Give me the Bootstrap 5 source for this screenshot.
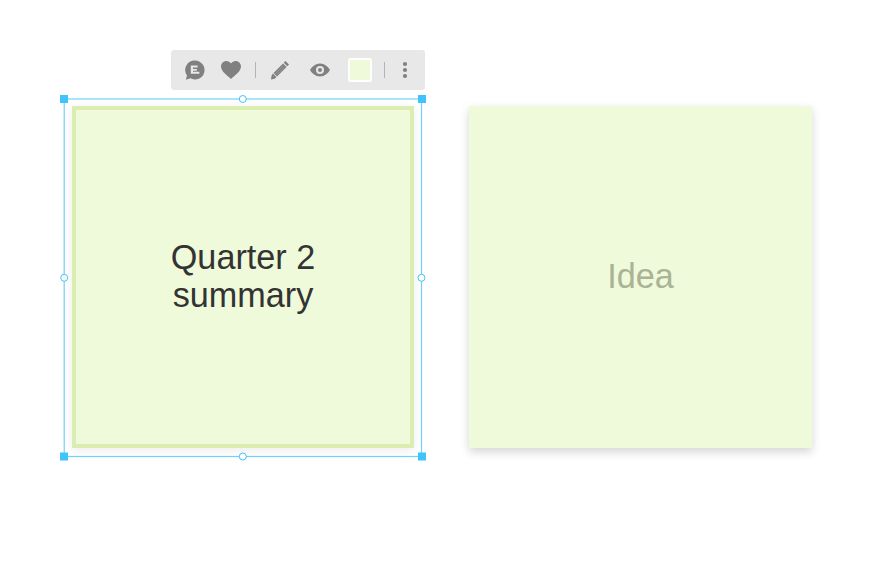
<!DOCTYPE html>
<html lang="en">

<head>
    <meta charset="UTF-8">
    <meta name="viewport" content="width=device-width, initial-scale=1.0">
    <title>Sticky notes</title>
    <link href="https://cdn.jsdelivr.net/npm/bootstrap@5.3.2/dist/css/bootstrap.min.css" rel="stylesheet">
    <style>
        body {
            background: #fff;
            overflow: hidden;
        }

        .board {
            position: relative;
            width: 882px;
            height: 562px;
        }

        /* Toolbar above the selected note */
        .note-toolbar {
            position: absolute;
            left: 171px;
            top: 50px;
            width: 254px;
            height: 40px;
            background: #e8e8e8;
            border-radius: 3px;
        }

        .tool {
            position: absolute;
            top: 10px;
            width: 20px;
            height: 20px;
            fill: #808080;
        }

        .tool-sep {
            position: absolute;
            top: 12px;
            width: 1px;
            height: 16px;
            background: #b4b4b4;
        }

        .pencil-line {
            fill: none;
            stroke: #a6a6a6;
            stroke-width: .7;
        }

        .swatch {
            position: absolute;
            left: 177px;
            top: 8px;
            width: 24px;
            height: 24px;
            background: #eefad9;
            border: 2px solid #fff;
            border-radius: 3px;
        }

        /* Notes */
        .sticky {
            position: absolute;
            top: 106px;
            height: 342px;
            padding-bottom: 3px;
            background: #eefad9;
            font-family: "Liberation Sans", Arial, sans-serif;
            font-size: 34.2px;
            line-height: 38px;
            text-align: center;
        }

        .sticky-selected {
            left: 72px;
            width: 342px;
            color: #333;
            border: 4px solid #dcedb1;
            box-shadow: 0 2px 10px rgba(0, 0, 0, .08);
        }

        .sticky-plain {
            left: 469px;
            width: 343px;
            color: #abb296;
            box-shadow: 0 4px 9px rgba(0, 0, 0, .17);
        }

        /* Selection frame and handles */
        .select-layer {
            position: absolute;
            left: 0;
            top: 0;
            width: 882px;
            height: 562px;
        }

        .frame-line {
            fill: none;
            stroke: #6fd3f7;
            stroke-width: 1.2;
        }

        .grip {
            fill: #3fc3f9;
        }

        .grip-round {
            fill: #fff;
            stroke: #3fc3f9;
            stroke-width: 1;
        }

        .t1 { left: 14px; }
        .t2 { left: 50px; }
        .t3 { left: 99px; }
        .t4 { left: 139px; }
        .t5 { left: 224px; }
        .s1 { left: 84px; }
        .s2 { left: 213px; }
    </style>
</head>

<body>
    <div class="board">
        <!-- Notes -->
        <div class="sticky sticky-selected d-flex align-items-center justify-content-center">
            <div>Quarter 2<br>summary</div>
        </div>
        <div class="sticky sticky-plain d-flex align-items-center justify-content-center">
            <div>Idea</div>
        </div>

        <!-- Selection -->
        <svg class="select-layer" viewBox="0 0 882 562">
            <rect class="frame-line" x="64.2" y="99" width="357.3" height="357.5"/>
            <rect class="grip" x="60" y="95" width="8" height="8"/>
            <rect class="grip" x="418" y="95" width="8" height="8"/>
            <rect class="grip" x="60" y="452.500" width="8" height="8"/>
            <rect class="grip" x="418" y="452.500" width="8" height="8"/>
            <circle class="grip-round" cx="242.800" cy="99" r="3.500"/>
            <circle class="grip-round" cx="242.800" cy="456.500" r="3.500"/>
            <circle class="grip-round" cx="64.200" cy="277.800" r="3.500"/>
            <circle class="grip-round" cx="421.500" cy="277.800" r="3.500"/>
        </svg>

        <!-- Toolbar -->
        <div class="note-toolbar">
            <svg class="tool t1" viewBox="0 0 20 20">
                <path fill-rule="evenodd" d="M10 .5a9.500 9.500 0 1 1-4.600 17.800L1.600 19.600a.5.5 0 0 1-.6-.7l1-3.400A9.500 9.500 0 0 1 10 .5zM5.800 5.600v8.200h8.600v-2H8v-1h3.800V9H8V7.600h4.600v-2z"/>
            </svg>
            <svg class="tool t2" viewBox="0 0 20 20">
                <path d="M10 19C7 16.300 0 11.600 0 6.600 0 3.300 2.500 1 5.400 1 7.300 1 9 2 10 3.500 11 2 12.700 1 14.600 1 17.500 1 20 3.300 20 6.600c0 5-7 9.700-10 12.400z"/>
            </svg>
            <span class="tool-sep s1"></span>
            <svg class="tool t3" viewBox="0 0 20 20">
                <path d="M15.400 1l3.600 3.600-1.700 1.700-3.600-3.600zM13 3.400l3.600 3.600-9.500 9.500-3.600-3.600zM2.900 13.600l3.500 3.500-1.300 1.300L1.500 19.500l-.5-.5.6-3.600z"/>
                <path class="pencil-line" d="M13.200 5.800l-7.800 7.800M14.800 7l-7.800 7.800"/>
            </svg>
            <svg class="tool t4" viewBox="0 0 20 20">
                <path fill-rule="evenodd" d="M10 3.500c4.500 0 8 3 10 6.500-2 3.500-5.500 6.500-10 6.500S2 13.500 0 10c2-3.500 5.500-6.500 10-6.500zm0 2.500a4 4 0 1 0 0 8 4 4 0 0 0 0-8zm0 2a2 2 0 1 1 0 4 2 2 0 0 1 0-4z"/>
            </svg>
            <span class="swatch"></span>
            <span class="tool-sep s2"></span>
            <svg class="tool t5" viewBox="0 0 20 20">
                <circle cx="10" cy="4" r="2.100"/>
                <circle cx="10" cy="10" r="2.100"/>
                <circle cx="10" cy="16" r="2.100"/>
            </svg>
        </div>
    </div>

    <script src="https://cdn.jsdelivr.net/npm/bootstrap@5.3.2/dist/js/bootstrap.bundle.min.js"></script>
</body>

</html>
